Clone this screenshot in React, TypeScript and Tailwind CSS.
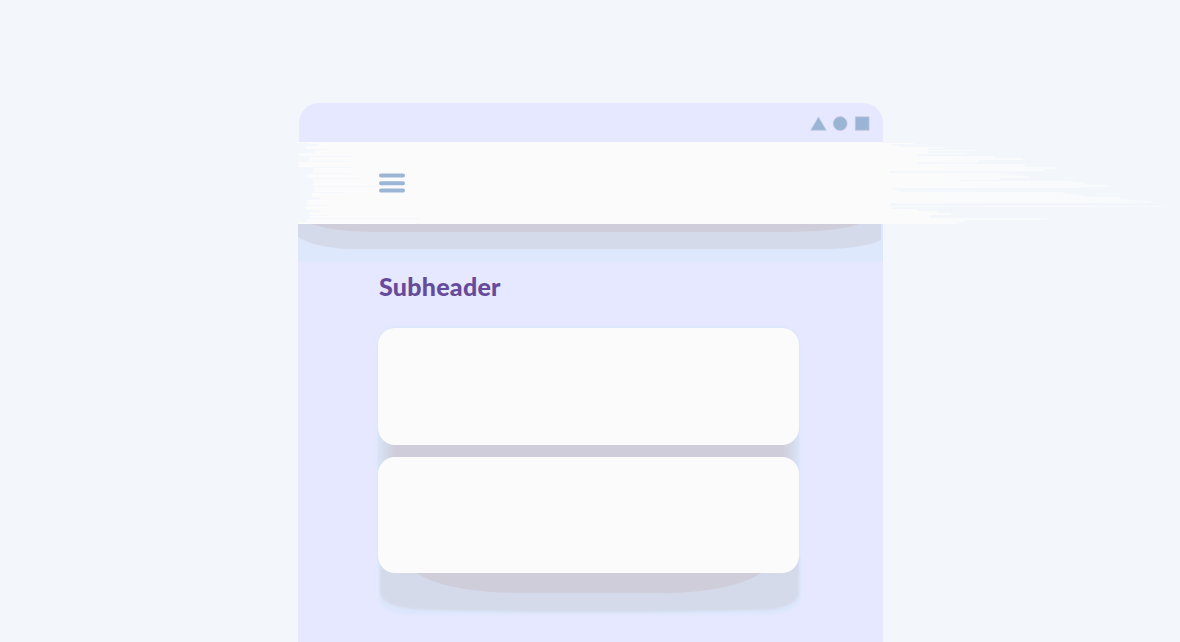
function StatusIcons() {
  return (
    <svg className="h-[15px] w-[60px]" viewBox="0 0 60 15" fill="#9ab5d4" stroke="#c9c6df" strokeWidth="0.7">
      <path d="M8.5 1 L16.3 14.2 H.7Z" />
      <circle cx="30.2" cy="7.6" r="7" />
      <path d="M45.3 .8 H59.1 V14.3 H45.3Z" />
    </svg>
  );
}

function MenuIcon() {
  return (
    <svg className="h-5 w-[26px]" viewBox="0 0 26 20" stroke="#9ab5d6" strokeWidth="4" strokeLinecap="round">
      <path d="M2 2.5H24M2 10.3H24M2 17.5H24" />
    </svg>
  );
}

function HeaderTrail() {
  return (
    <svg className="pointer-events-none absolute top-0 left-0 h-[82px] w-[882px]" viewBox="298 142 882 82">
      <defs>
        <linearGradient id="fade" gradientUnits="userSpaceOnUse" x1="882" y1="0" x2="1170" y2="0">
          <stop offset="0" stopColor="#fbfbfb" />
          <stop offset=".5" stopColor="#fafbfc" stopOpacity=".85" />
          <stop offset="1" stopColor="#f9fbfc" stopOpacity=".6" />
        </linearGradient>
      </defs>
      <path
        fill="url(#fade)"
        d="M882 143H914V144H891L901 147H945V148H928V150H974V151H928V153H966V154H918V156H995V158H1023V160H978V162H918V164H1025V167H1054V169H1045V171H890V173H998L1021 176H1029V178H1000V180H960V181H1070L1094 185H1109V187H1080V188H890L903 192H1060L1091 197H1120V199L1151 201V203H890V206H1167V207H892V209H917V211H937V213H951V215H930V218H1048V220H965V222H956V224H882Z"
      />
      <path
        fill="#f3f8fc"
        fillOpacity=".8"
        d="M298 143H307V144H318V146H306V149H330V150H315V153H299V156H354V157H309V161H350V162H299V167H353V168H313V173H350V174H307V178H360V179H313V186H390V187H315V192H346V193H312V197H320V200H307V205H330V206H306V210H320V212H309V215H328V216H309V218H420V219H307V222H298Z"
      />
    </svg>
  );
}

function HeaderShadow() {
  return (
    <svg className="block h-[38px] w-full" viewBox="0 0 585 38" preserveAspectRatio="none">
      <path fill="#dde8fc" d="M0 0H585V37.5H0Z" />
      <path fill="#d5daea" d="M0 0H583V16Q570 23 535 25H50Q16 23 0 13Z" />
      <path fill="#cfcdda" d="M12 0H561Q540 8 480 8H75Q38 8 12 0Z" />
    </svg>
  );
}

function BottomShadow() {
  return (
    <svg className="block h-[62px] w-[424px]" viewBox="0 0 424 62">
      <defs>
        <filter id="soften" x="-5%" y="-20%" width="110%" height="140%">
          <feGaussianBlur stdDeviation="1" />
        </filter>
      </defs>
      <path fill="#dbe6fc" filter="url(#soften)" d="M0 0H423V40Q420 57 385 57H30Q1 57 1 36Z" />
      <path fill="#d5daea" filter="url(#soften)" d="M2 0H421V36Q419 51 385 53Q210 57 50 53Q5 52 2 36Z" />
      <path fill="#cfcdda" d="M38 16H384Q350 36 285 36H144Q70 36 38 16Z" />
    </svg>
  );
}

export default function App() {
  return (
    <main className="h-[642px] overflow-hidden bg-[#f3f7fb] pt-[103px] pl-[298px] font-['Lato','Liberation_Sans',sans-serif]">
      <div className="flex w-[585px] flex-col">
        <div className="ml-px flex h-[39px] items-start justify-end rounded-t-[20px] bg-[#e5e8fe] pt-[13px] pr-[13px]">
          <StatusIcons />
        </div>
        <header className="relative flex h-[82px] items-center bg-[#fbfbfb] pl-[81px]">
          <HeaderTrail />
          <span className="relative">
            <MenuIcon />
          </span>
        </header>
        <section className="h-[418px] bg-[#e5e8fe]">
          <HeaderShadow />
          <div className="flex flex-col pl-20">
            <h1 className="mt-[7px] ml-px h-[34px] text-[25px] leading-[34px] font-black tracking-[0.25px] whitespace-nowrap text-[#664b9b]">
              Subheader
            </h1>
            <div className="mt-[25px] flex w-[421px] flex-col rounded-[18px] bg-[linear-gradient(to_right,#dae4f7_0px,#d5daea_7px,#d2d3e2_12px,#cfcdda_17px,#cfcdda_404px,#d2d3e2_409px,#d5daea_414px,#dae4f7_421px)] shadow-[0_0_2px_1px_#dae6fb]">
              <div className="h-[117px] rounded-[17px] bg-[#fbfbfb]" />
              <div className="h-3" />
              <div className="relative z-10 h-[116px] rounded-[17px] bg-[#fbfbfb]" />
            </div>
            <div className="-mt-4">
              <BottomShadow />
            </div>
          </div>
        </section>
      </div>
    </main>
  );
}
